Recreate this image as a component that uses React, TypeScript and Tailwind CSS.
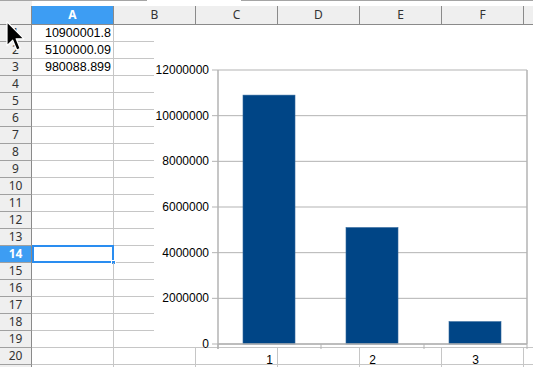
import React from "react";

const cols = ["A", "B", "C", "D", "E", "F", "G"];
const data: Record<number, string> = { 1: "10900001.8", 2: "5100000.09", 3: "980088.899" };
const rows = Array.from({ length: 21 }, (_, i) => i + 1);

const values = [10900001.8, 5100000.09, 980088.899];
const yLabels = ["12000000", "10000000", "8000000", "6000000", "4000000", "2000000", "0"];

// chart coordinates are relative to the chart object (sheet x 154, y 25)
const plotTop = 45;
const plotBottom = 319;
const plotLeft = 64;
const plotRight = 373;

const Chart = () => {
  const h = plotBottom - plotTop;
  const step = h / 6;
  const cat = (plotRight - plotLeft) / 3;
  return (
    <svg width={379} height={342} className="absolute left-[154px] top-[25px]" style={{ fontFamily: '"Liberation Sans", Arial, sans-serif' }}>
      <rect x={0} y={0} width={379} height={322} fill="#ffffff" />
      {yLabels.map((l, i) => {
        const y = plotTop + i * step;
        return (
          <g key={l}>
            <line x1={58} x2={plotRight} y1={y} y2={y} stroke="#b3b3b3" strokeWidth={1} />
            <text x={55} y={y + 4} fontSize={12} textAnchor="end" fill="#000">
              {l}
            </text>
          </g>
        );
      })}
      <line x1={plotRight} x2={plotRight} y1={plotTop} y2={plotBottom} stroke="#b3b3b3" strokeWidth={1.5} />
      {values.map((v, i) => {
        const bh = (v / 12000000) * h;
        const x = plotLeft + i * cat + 25;
        return <rect key={i} x={x} y={plotBottom - bh} width={52} height={bh} fill="#004586" stroke="#2f669b" strokeWidth={0.6} />;
      })}
      <line x1={plotLeft} x2={plotLeft} y1={plotTop} y2={plotBottom + 5} stroke="#b3b3b3" strokeWidth={1.5} />
      <line x1={plotLeft} x2={plotRight} y1={plotBottom} y2={plotBottom} stroke="#b3b3b3" strokeWidth={1.5} />
      {[0, 1, 2, 3].map((i) => (
        <line key={i} x1={plotLeft + i * cat} x2={plotLeft + i * cat} y1={plotBottom} y2={plotBottom + 5} stroke="#b3b3b3" strokeWidth={1} />
      ))}
      {[1, 2, 3].map((n, i) => (
        <text key={n} x={plotLeft + i * cat + cat / 2} y={339} fontSize={12} textAnchor="middle" fill="#000">
          {n}
        </text>
      ))}
    </svg>
  );
};

const Cursor = () => (
  <svg width={20} height={30} viewBox="0 0 13 20" className="absolute left-[6px] top-[21px]">
    <path d="M0.5 0.5 V16.5 L4.3 12.8 L7 19.3 L9.3 18.3 L6.6 11.9 L11.8 11.9 Z" fill="#000" stroke="#fff" strokeWidth={0.8} strokeLinejoin="round" />
  </svg>
);

export default function App() {
  return (
    <div className="relative w-[533px] h-[367px] overflow-hidden bg-white text-[#222]" style={{ fontFamily: '"Noto Sans", sans-serif' }}>
      <div className="flex h-[6px]">
        <div className="w-[32px] bg-[#efefef] border-t border-[#a5a5a5]" />
        <div className="w-[115px] border-t border-[#a5a5a5]" />
        <div className="w-[94px]" />
        <div className="flex-1 border-t border-[#a5a5a5]" />
      </div>
      <div className="flex h-[19px] bg-[#efefef] border-b border-[#8a8a8a]">
        <div className="w-[32px] shrink-0 border-r border-[#8a8a8a]" />
        {cols.map((c) => (
          <div
            key={c}
            className={
              c === "A"
                ? "w-[82px] shrink-0 bg-[#3d9df3] text-white font-bold text-[12px] leading-[18px] text-center border-r border-[#8a8a8a]"
                : "w-[82px] shrink-0 text-[12px] leading-[18px] text-center text-[#333] border-r border-[#8a8a8a]"
            }
          >
            {c === "G" ? "" : c}
          </div>
        ))}
      </div>
      {rows.map((r) => (
        <div key={r} className="flex h-[17px] border-b border-[#c6c6c6]">
          <div
            className={
              r === 14
                ? "w-[32px] shrink-0 bg-[#3d9df3] text-white font-bold text-[12px] leading-[16px] text-center border-r border-[#8a8a8a] border-b border-b-[#a0a0a0] -mb-px"
                : "w-[32px] shrink-0 bg-[#efefef] text-[12px] leading-[16px] text-center text-[#333] border-r border-[#8a8a8a] border-b border-b-[#a0a0a0] -mb-px"
            }
          >
            {r > 20 ? "" : r}
          </div>
          {cols.map((c) => (
            <div key={c} className="relative w-[82px] shrink-0 border-r border-[#c6c6c6] text-right pr-[2px] text-[12.5px] leading-[16px] text-black" style={{ fontFamily: '"Liberation Sans", Arial, sans-serif' }}>
              {c === "A" ? data[r] ?? "" : ""}
              {c === "A" && r === 14 && (
                <>
                  <div className="absolute left-0 top-[-1px] w-[82px] h-[18px] border-2 border-[#2a8df0]" />
                  <div className="absolute left-[79px] top-[14px] w-[5px] h-[5px] bg-[#2a8df0] border border-white" />
                </>
              )}
            </div>
          ))}
        </div>
      ))}
      <Chart />
      <Cursor />
    </div>
  );
}
